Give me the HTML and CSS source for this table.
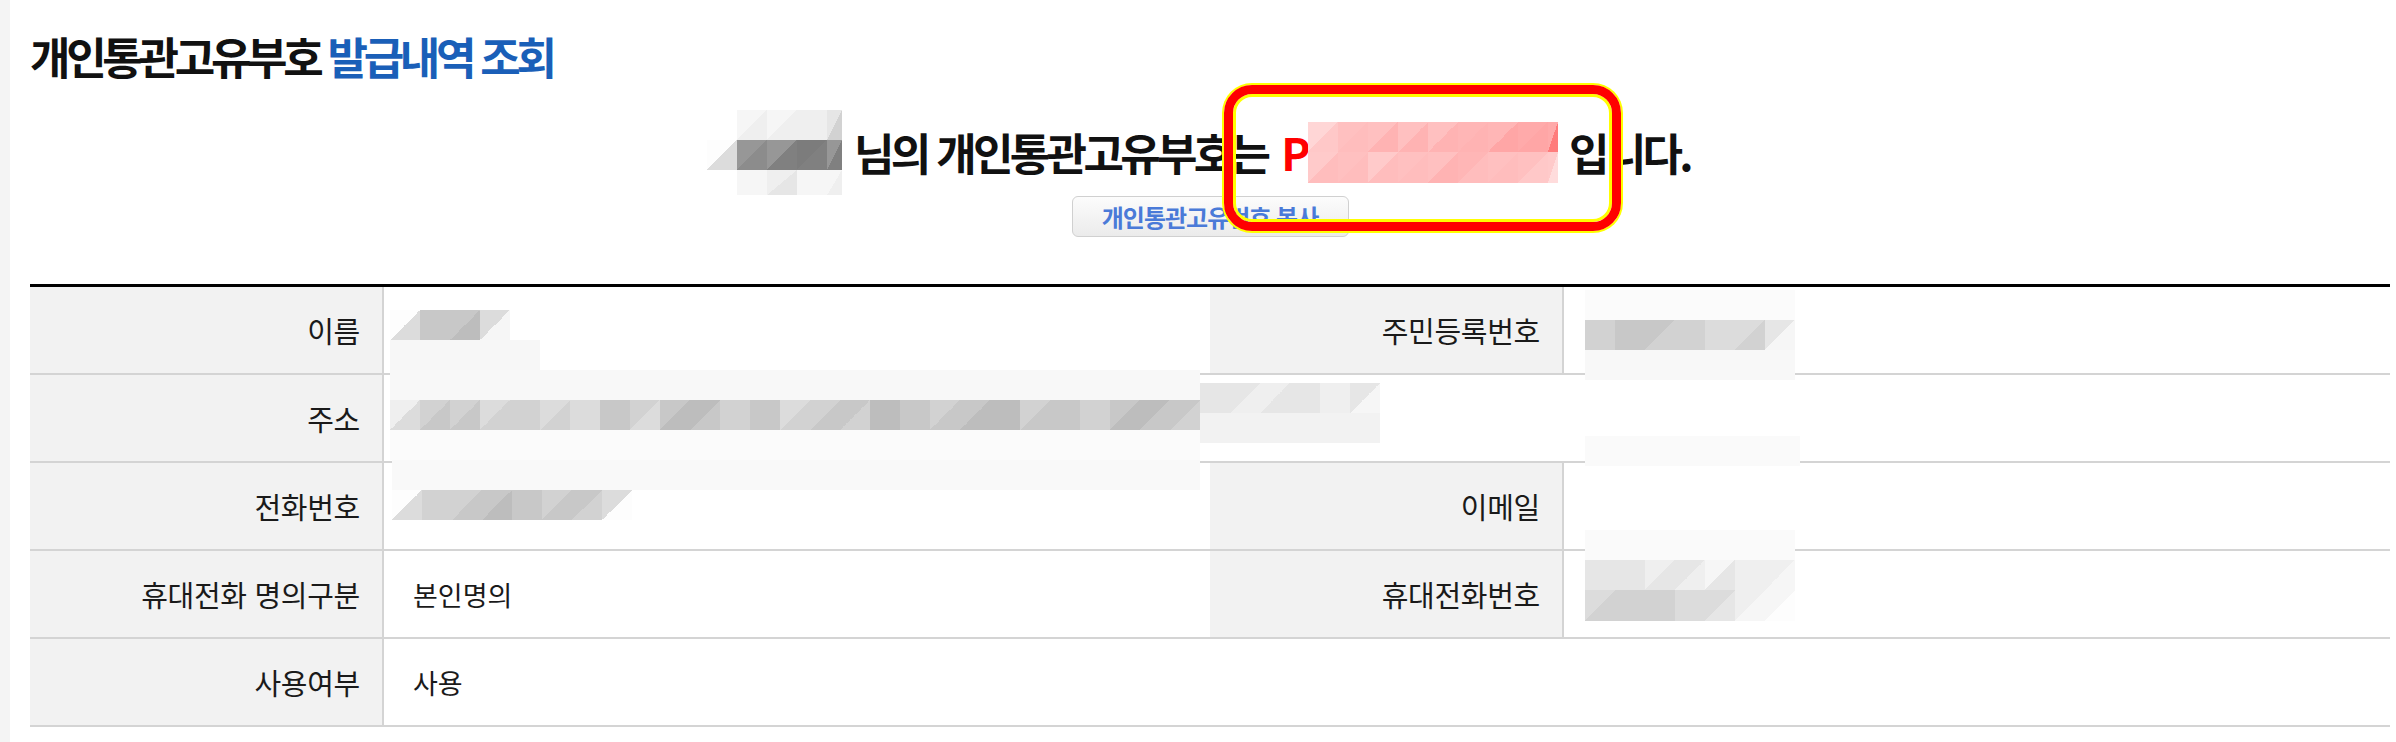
FILE: index.html
```html
<!DOCTYPE html>
<html lang="ko">
<head>
<meta charset="utf-8">
<title>개인통관고유부호 발급내역 조회</title>
<link rel="stylesheet" href="styles.css">
</head>
<body>
<div class="layout">
  <aside class="strip"></aside>
  <main class="page">
    <h1 class="title">개인통관고유부호 <span class="accent">발급내역 조회</span></h1>
    <section class="result">
      <p class="sentence">
        <span class="mosaic mosaic-name">
          <i></i><i class="a1 b2"></i><i class="a1 b2"></i><i class="a2 b2"></i><i class="a3 b5"></i>
          <i class="a0 b4"></i><i class="a8 b8"></i><i class="a8 b9"></i><i class="a9 b9"></i><i class="a8 b9"></i>
          <i></i><i class="a1 b1"></i><i class="a2 b3"></i><i class="a1 b1"></i><i class="a1 b2"></i>
        </span>
        <span class="lead">님의 개인통관고유부호는</span>
        <span class="code">P</span>
        <span class="mosaic mosaic-code">
          <i class="pa0 pb1"></i><i class="pa2 pb2"></i><i class="pa2 pb3"></i><i class="pa2 pb3"></i><i class="pa2 pb3"></i><i class="pa3 pb3"></i><i class="pa3 pb4"></i><i class="pa4 pb4"></i><i class="pa4 pb5"></i>
          <i class="pa1 pb2"></i><i class="pa2 pb2"></i><i class="pa1 pb2"></i><i class="pa2 pb2"></i><i class="pa2 pb3"></i><i class="pa3 pb2"></i><i class="pa2 pb2"></i><i class="pa2 pb1"></i><i class="pa1 pb0"></i>
        </span>
        <span class="tail">입니다.</span>
      </p>
      <button class="copy-btn" type="button">개인통관고유번호 복사</button>
    </section>
    <div class="info">
      <div class="th">이름</div><div class="td"></div>
      <div class="th">주민등록번호</div><div class="td"></div>
      <div class="th">주소</div><div class="td wide"></div>
      <div class="th">전화번호</div><div class="td"></div>
      <div class="th">이메일</div><div class="td"></div>
      <div class="th">휴대전화 명의구분</div><div class="td">본인명의</div>
      <div class="th">휴대전화번호</div><div class="td"></div>
      <div class="th">사용여부</div><div class="td wide">사용</div>
    </div>
  </main>

  <div class="redact r-name">
    <i class="a0 b4"></i><i class="a6 b6"></i><i class="a6 b7"></i><i class="a4 b1"></i>
  </div>
  <div class="redact r-rrn">
    <i class="a5 b5"></i><i class="a6 b6"></i><i class="a6 b5"></i><i class="a5 b5"></i><i class="a4 b4"></i><i class="a4 b5"></i><i class="a3 b1"></i>
  </div>
  <div class="redact r-addr">
    <i class="a2 b4"></i><i class="a5 b6"></i><i class="a5 b6"></i><i class="a4 b5"></i><i class="a5 b5"></i><i class="a4 b5"></i><i class="a4 b4"></i><i class="a6 b6"></i><i class="a5 b4"></i><i class="a6 b7"></i><i class="a7 b6"></i><i class="a5 b5"></i><i class="a6 b6"></i><i class="a4 b5"></i><i class="a5 b6"></i><i class="a6 b5"></i><i class="a7 b7"></i><i class="a6 b6"></i><i class="a5 b6"></i><i class="a6 b7"></i><i class="a7 b7"></i><i class="a5 b6"></i><i class="a6 b6"></i><i class="a5 b5"></i><i class="a6 b7"></i><i class="a7 b6"></i><i class="a6 b5"></i>
  </div>
  <div class="redact r-addr2">
    <i class="a3 b3"></i><i class="a3 b2"></i><i class="a2 b3"></i><i class="a3 b3"></i><i class="a2 b2"></i><i class="a3 b1"></i>
  </div>
  <div class="redact r-faint"></div>
  <div class="redact r-phone">
    <i class="a0 b4"></i><i class="a5 b5"></i><i class="a5 b6"></i><i class="a6 b7"></i><i class="a6 b6"></i><i class="a5 b6"></i><i class="a6 b5"></i><i class="a4 b0"></i>
  </div>
  <div class="redact r-mobile">
    <i class="a3 b3"></i><i class="a3 b3"></i><i class="a2 b3"></i><i class="a3 b2"></i><i class="a1 b3"></i><i class="a2 b2"></i><i class="a2 b1"></i>
    <i class="a4 b5"></i><i class="a5 b5"></i><i class="a5 b5"></i><i class="a4 b4"></i><i class="a4 b3"></i><i class="a2 b1"></i><i class="a1 b0"></i>
  </div>

  <div class="highlight"></div>
</div>
</body>
</html>
```

FILE: styles.css
```css
html, body {
  margin: 0;
  background: #fff;
}

body {
  font-family: "Noto Sans CJK KR", "Noto Sans", sans-serif;
  color: #111;
}

.layout {
  position: relative;
  display: flex;
  min-height: 742px;
}

.strip {
  flex: none;
  width: 10px;
  background: #f4f4f4;
}

.page {
  flex: 1;
  padding: 0 6px 0 20px;
}

.title {
  margin: 0;
  padding-top: 32px;
  font-size: 44px;
  line-height: 48px;
  font-weight: 700;
  letter-spacing: -4.3px;
}

.accent {
  color: #1a5fb8;
}

.result {
  display: flex;
  flex-direction: column;
  align-items: center;
}

.sentence {
  margin: 48px 0 0;
  height: 48px;
  display: flex;
  justify-content: center;
  align-items: center;
  padding-right: 23px;
  font-size: 44px;
  line-height: 48px;
  font-weight: 700;
  letter-spacing: -3.7px;
  white-space: nowrap;
}

.lead {
  margin-left: 12px;
}

.code {
  margin-left: 14px;
  margin-right: 1px;
  color: #f00;
}

.tail {
  margin-left: 11px;
}

/* pixel mosaic used for redacted values */
.mosaic {
  display: grid;
  flex: none;
}

.mosaic i,
.redact i {
  display: block;
  background: linear-gradient(to bottom right, var(--a, transparent) 50%, var(--b, transparent) 50%);
}

.mosaic-name {
  grid-template-columns: 30px 30px 30px 30px 15px;
  grid-template-rows: 30px 30px 25px;
  height: 85px;
}

.mosaic-code {
  grid-template-columns: repeat(8, 30px) 10px;
  grid-template-rows: 30px 31px;
  height: 61px;
}

.a0 { --a: #fdfdfd; } .b0 { --b: #fdfdfd; }
.a1 { --a: #f6f6f6; } .b1 { --b: #f6f6f6; }
.a2 { --a: #efefef; } .b2 { --b: #efefef; }
.a3 { --a: #e6e6e6; } .b3 { --b: #e6e6e6; }
.a4 { --a: #dcdcdc; } .b4 { --b: #dcdcdc; }
.a5 { --a: #d2d2d2; } .b5 { --b: #d2d2d2; }
.a6 { --a: #c8c8c8; } .b6 { --b: #c8c8c8; }
.a7 { --a: #bdbdbd; } .b7 { --b: #bdbdbd; }
.a8 { --a: #979797; } .b8 { --b: #8c8c8c; }
.a9 { --a: #7c7c7c; } .b9 { --b: #808080; }

.pa0 { --a: #ffd6d6; } .pb0 { --b: #ffdcdc; }
.pa1 { --a: #ffcaca; } .pb1 { --b: #ffc8c8; }
.pa2 { --a: #ffc0c0; } .pb2 { --b: #ffbdbd; }
.pa3 { --a: #ffb6b6; } .pb3 { --b: #ffb3b3; }
.pa4 { --a: #ffaaaa; } .pb4 { --b: #ffa6a6; }
.pa5 { --a: #ff9494; } .pb5 { --b: #ff7c7c; }

.copy-btn {
  margin-top: 20px;
  width: 277px;
  height: 41px;
  padding: 0;
  border: 1px solid #d0d0d0;
  border-radius: 6px;
  background: linear-gradient(#fcfcfc, #ebebeb);
  font-family: inherit;
  font-size: 24px;
  line-height: 38px;
  font-weight: 700;
  letter-spacing: -1px;
  color: #4a7ad8;
}

.info {
  margin-top: 47px;
  display: grid;
  grid-template-columns: 354px 826px 354px 826px;
  border-top: 3px solid #000;
}

.th,
.td {
  box-sizing: border-box;
  height: 88px;
  display: flex;
  align-items: center;
  border-bottom: 2px solid #d4d4d4;
  color: #1a1a1a;
}

.th {
  justify-content: flex-end;
  padding-right: 22px;
  background: #f2f2f2;
  border-right: 2px solid #d4d4d4;
  font-size: 29px;
  letter-spacing: -0.3px;
}

.td {
  padding-left: 29px;
  font-size: 27px;
  letter-spacing: 0;
}

.td.wide {
  grid-column: span 3;
}

/* redaction overlays (page coordinates) */
.redact {
  position: absolute;
  display: grid;
  grid-auto-flow: column;
  grid-auto-columns: 30px;
  grid-template-rows: 30px;
}

.r-name {
  left: 390px;
  top: 310px;
  height: 60px;
  padding-right: 30px;
  background: linear-gradient(transparent 30px, #f7f7f7 30px);
}

.r-rrn {
  left: 1585px;
  top: 290px;
  padding: 30px 0;
  background: linear-gradient(#fbfbfb 30px, transparent 30px 60px, #f8f8f8 60px);
}

.r-addr {
  left: 390px;
  top: 370px;
  padding: 30px 0;
  background: linear-gradient(#f8f8f8 30px, transparent 30px 60px, #fbfbfb 60px);
}

.r-addr2 {
  left: 1200px;
  top: 383px;
  padding: 0 0 30px;
  background: linear-gradient(transparent 30px, #f2f2f2 30px);
}

.r-faint {
  left: 1585px;
  top: 436px;
  width: 215px;
  height: 30px;
  background: #fafafa;
}

.r-phone {
  left: 392px;
  top: 460px;
  padding-top: 30px;
  width: 808px;
  background: linear-gradient(#f9f9f9 30px, transparent 30px);
  grid-template-columns: repeat(8, 30px);
}

.r-mobile {
  left: 1585px;
  top: 530px;
  padding-top: 30px;
  grid-auto-flow: row;
  grid-template-columns: repeat(7, 30px);
  grid-template-rows: 30px 31px;
  background: linear-gradient(#fafafa 30px, transparent 30px);
}

/* annotation highlight drawn over the code */
.highlight {
  position: absolute;
  left: 1224px;
  top: 85px;
  width: 397px;
  height: 146px;
  box-sizing: border-box;
  border: 9px solid #ff0000;
  border-radius: 28px;
  box-shadow: 0 0 0 2px #ffff00, inset 0 0 0 3px #ffff00;
}
```
